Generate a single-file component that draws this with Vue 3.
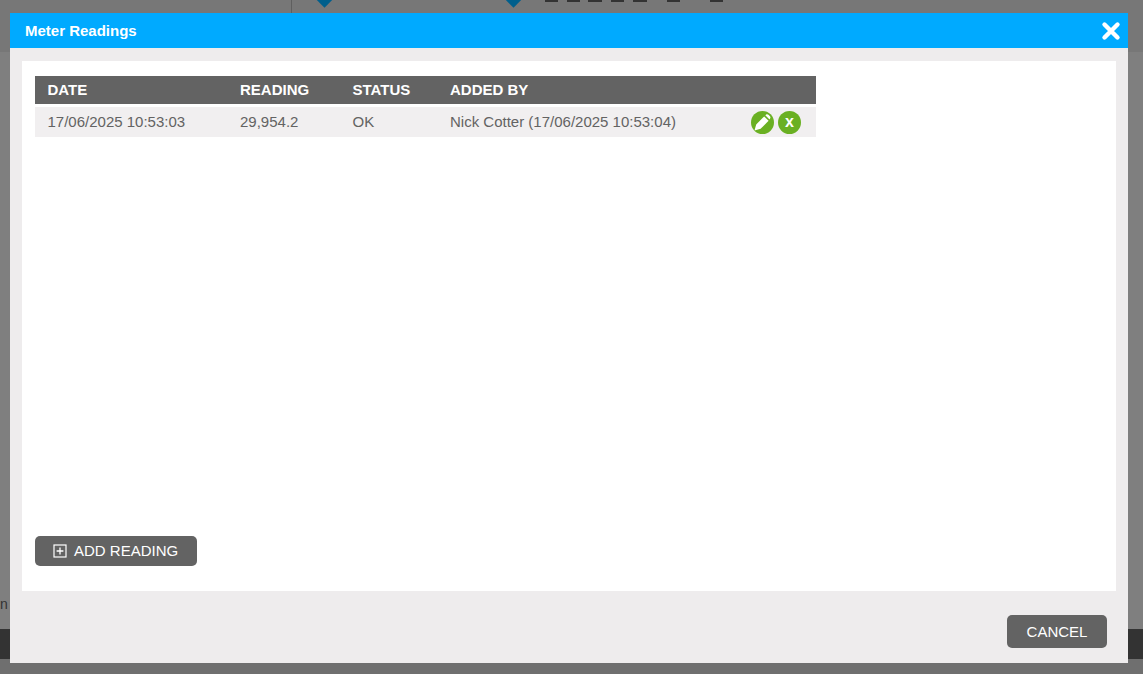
<script setup>
const marks = [
  { left: 545, width: 13 }, { left: 567, width: 13 }, { left: 588, width: 14 },
  { left: 611, width: 13 }, { left: 633, width: 14 }, { left: 667, width: 13 }, { left: 710, width: 13 }
]
const headers = [
  { label: 'DATE', cls: 'c1' }, { label: 'READING', cls: 'c2' },
  { label: 'STATUS', cls: 'c3' }, { label: 'ADDED BY', cls: 'c4' }
]
</script>

<template>
  <div class="page">
    <div class="bg">
      <div class="bg-top">
        <span class="vline"></span>
        <span class="diamond d1"></span>
        <span class="diamond d2"></span>
        <span v-for="m in marks" :key="m.left" class="mark" :style="{ left: m.left + 'px', width: m.width + 'px' }"></span>
      </div>
      <div class="bg-main"><span class="bg-n">n</span></div>
      <div class="bg-foot"></div>
      <div class="bg-end"></div>
    </div>

    <div class="modal">
      <header class="modal-head">
        <span class="title">Meter Readings</span>
        <svg class="close" width="20" height="20" viewBox="0 0 20 20" aria-label="Close">
          <path d="M3.5 3.5 L16.5 16.5 M16.5 3.5 L3.5 16.5" stroke="#fff" stroke-width="4.4" stroke-linecap="round" fill="none" />
        </svg>
      </header>
      <div class="modal-body">
        <section class="panel">
          <div class="table">
            <div class="thead">
              <span v-for="h in headers" :key="h.label" :class="h.cls">{{ h.label }}</span>
            </div>
            <div class="trow">
              <span class="c1">17/06/2025 10:53:03</span>
              <span class="c2">29,954.2</span>
              <span class="c3">OK</span>
              <span class="c4">Nick Cotter (17/06/2025 10:53:04)</span>
              <span class="actions">
                <svg width="23" height="23" viewBox="0 0 23 23">
                  <circle cx="11.5" cy="11.5" r="11.5" fill="#6ab023" />
                  <path d="M3.5 19.5 L5.2 13.4 L13.2 5.4 L17.6 9.8 L9.6 17.8 Z" fill="#fff" />
                  <path d="M14.3 4.3 L15.5 3.3 Q16.5 2.9 17.5 3.7 L19.2 5.5 Q19.8 6.5 19.1 7.5 L18.5 8.5 Z" fill="#fff" />
                </svg>
                <span class="x-btn">x</span>
              </span>
            </div>
          </div>
          <button class="btn add" type="button">
            <svg width="14" height="14" viewBox="0 0 14 14">
              <rect x="1" y="1" width="12" height="12" fill="none" stroke="#fff" stroke-width="1.2" />
              <path d="M7 3.6 V10.4 M3.6 7 H10.4" stroke="#fff" stroke-width="1.3" />
            </svg>
            <span class="add-label">ADD READING</span>
          </button>
        </section>
        <footer class="modal-foot">
          <button class="btn cancel" type="button">CANCEL</button>
        </footer>
      </div>
    </div>
  </div>
</template>

<style>
html, body { margin: 0; padding: 0; overflow: hidden; }
</style>

<style scoped>
.page {
  position: relative;
  width: 1143px;
  height: 674px;
  overflow: hidden;
  font-family: "Liberation Sans", Arial, sans-serif;
}
.bg { display: flex; flex-direction: column; height: 100%; }
.bg-top { position: relative; height: 52px; background: #777777; }
.bg-main { position: relative; height: 577px; background: #7f7f7f; }
.bg-foot { height: 30px; background: #333333; }
.bg-end { flex: 1; background: #6f6f6f; }
.vline { position: absolute; left: 291px; top: 0; width: 1px; height: 13px; background: #5f5f5f; }
.diamond {
  position: absolute;
  top: -8px;
  width: 13px;
  height: 13px;
  background: #005f8c;
  transform: rotate(45deg);
}
.d1 { left: 318px; }
.d2 { left: 507px; }
.mark { position: absolute; top: 0; height: 2px; background: #333333; }
.bg-n {
  position: absolute;
  left: 0;
  top: 544px;
  font-size: 14px;
  line-height: 16px;
  color: #333333;
}

.modal {
  position: absolute;
  left: 10px;
  top: 13px;
  width: 1118px;
  height: 650px;
  display: flex;
  flex-direction: column;
  background: #eeeced;
}
.modal-head {
  height: 35px;
  flex: none;
  display: flex;
  align-items: center;
  justify-content: space-between;
  padding: 0 7px 0 15px;
  background: #00aaff;
  color: #fff;
}
.title { font-size: 15px; font-weight: 700; }
.close { display: block; margin-top: 1px; }
.modal-body {
  flex: 1;
  display: flex;
  flex-direction: column;
  padding: 13px 12px 0;
}
.panel {
  height: 530px;
  box-sizing: border-box;
  padding: 15px 13px 25px;
  background: #fff;
  display: flex;
  flex-direction: column;
  justify-content: space-between;
  align-items: flex-start;
}
.table { width: 781px; }
.thead, .trow { display: flex; align-items: center; }
.thead {
  height: 28px;
  box-sizing: border-box;
  padding-bottom: 2px;
  background: #636363;
  color: #fff;
  font-size: 15px;
  font-weight: 700;
}
.trow {
  margin-top: 3px;
  height: 30px;
  background: #f1eff0;
  color: #636363;
  font-size: 15px;
}
.trow > span:not(.actions) { position: relative; top: -1px; }
.c1 { width: 205px; padding-left: 12.5px; box-sizing: border-box; }
.c2 { width: 112.5px; }
.c3 { width: 97.5px; }
.c4 { flex: 1; }
.actions {
  display: flex;
  align-items: center;
  gap: 4px;
  width: 50px;
  margin-right: 15px;
}
.actions svg { display: block; }
.x-btn {
  flex: none;
  width: 23px;
  height: 23px;
  border-radius: 50%;
  background: #6ab023;
  color: #fff;
  font-size: 16px;
  font-weight: 700;
  line-height: 21px;
  text-align: center;
}
.btn {
  border: 0;
  background: #636363;
  color: #fff;
  font-family: inherit;
  font-size: 15px;
  border-radius: 5px;
  padding: 0;
}
.add {
  width: 162px;
  height: 30px;
  display: flex;
  align-items: center;
  gap: 7px;
  padding-left: 18px;
  box-sizing: border-box;
}
.add svg { display: block; }
.add-label { position: relative; top: -1px; }
.modal-foot {
  display: flex;
  justify-content: flex-end;
  padding: 24px 9px 0 0;
}
.cancel { width: 100px; height: 33px; }
</style>
